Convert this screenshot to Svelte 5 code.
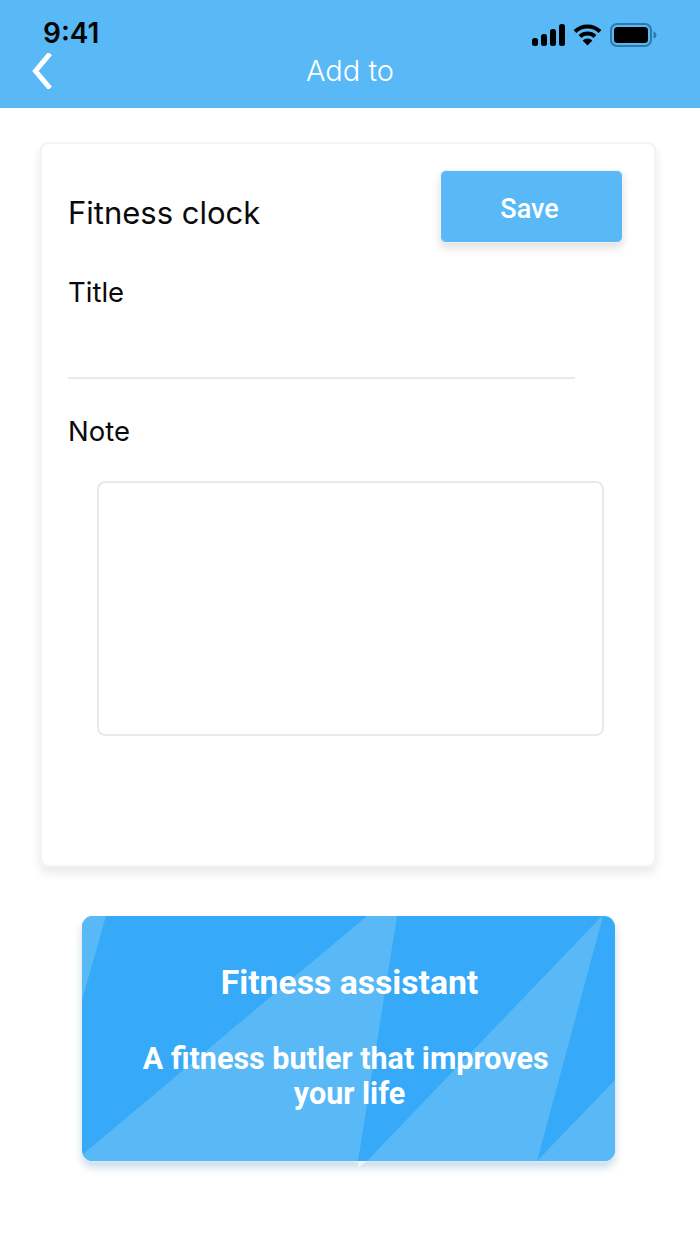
<script>
  const bannerShapes = [
    "0,0 24,0 0,84",
    "0,245 0,239 285,0 315,0 276,245",
    "285,245 520,0 521,0 455,245",
    "455,245 533,164 533,245"
  ];
</script>

<div class="page">
  <header class="top">
    <div class="status">
      <span class="time">9:41</span>
      <div class="indicators">
        <svg class="signal" width="33" height="22" viewBox="0 0 33 22" aria-hidden="true">
          <rect x="0" y="14" width="6" height="8" rx="2.5" />
          <rect x="9" y="10" width="6" height="12" rx="2.5" />
          <rect x="18" y="5" width="6" height="17" rx="2.5" />
          <rect x="27" y="0" width="6" height="22" rx="2.5" />
        </svg>
        <svg class="wifi" width="29" height="22" viewBox="0 0 29 22" aria-hidden="true">
          <path d="M2 7.5 A18 18 0 0 1 27 7.5" />
          <path d="M7 12.5 A11 11 0 0 1 22 12.5" />
          <path class="dot" d="M9.6 16.4 A7 7 0 0 1 19.4 16.4 L14.5 21.5 Z" />
        </svg>
        <svg class="battery" width="47" height="24" viewBox="0 0 47 24" aria-hidden="true">
          <rect class="shell" x="1" y="1" width="40" height="22" rx="6" />
          <rect class="level" x="4" y="4" width="34" height="16" rx="3.5" />
          <path class="cap" d="M43.5 8.5 C45.5 9 46.5 10.5 46.5 12 C46.5 13.5 45.5 15 43.5 15.5 Z" />
        </svg>
      </div>
    </div>
    <nav class="bar">
      <svg class="back" width="20" height="36" viewBox="0 0 20 36" aria-hidden="true">
        <path d="M16.5 2.5 L3.5 18 L16.5 33.5" />
      </svg>
      <h1>Add to</h1>
    </nav>
  </header>

  <main class="content">
    <section class="card">
      <div class="card-head">
        <h2>Fitness clock</h2>
        <button class="save" type="button">Save</button>
      </div>
      <label class="label title-label" for="title">Title</label>
      <input id="title" class="title-input" type="text" />
      <label class="label note-label" for="note">Note</label>
      <textarea id="note" class="note"></textarea>
    </section>

    <section class="banner">
      <div class="banner-face">
        <svg class="banner-art" width="533" height="245" viewBox="0 0 533 245" aria-hidden="true">
          {#each bannerShapes as points}
            <polygon {points} />
          {/each}
        </svg>
        <h3>Fitness assistant</h3>
        <p>A fitness butler that improves&nbsp; your life</p>
      </div>
      <span class="wedge"></span>
    </section>
  </main>
</div>

<style>
  :global(body) {
    margin: 0;
    background: #fff;
  }

  .page {
    width: 700px;
    height: 1244px;
    display: flex;
    flex-direction: column;
    overflow: hidden;
    background: #fff;
    font-family: Inter, "Liberation Sans", sans-serif;
  }

  .top {
    height: 108px;
    flex: none;
    box-sizing: border-box;
    padding-top: 17px;
    background: #58b9f6;
  }

  .status {
    height: 32px;
    display: flex;
    align-items: center;
    justify-content: space-between;
    padding: 0 43px 0 43px;
  }

  .time {
    color: #050505;
    font-size: 28px;
    font-weight: 600;
    line-height: 32px;
  }

  .indicators {
    display: flex;
    align-items: center;
    gap: 8px;
    padding-top: 4px;
  }

  .signal rect,
  .level {
    fill: #000;
  }

  .wifi path {
    fill: none;
    stroke: #000;
    stroke-width: 4;
  }

  .wifi .dot {
    fill: #000;
    stroke: none;
  }

  .shell {
    fill: none;
    stroke: #2f7aab;
    stroke-width: 2;
  }

  .cap {
    fill: #2f7aab;
  }

  .bar {
    height: 44px;
    display: grid;
    grid-template-columns: 1fr auto 1fr;
    align-items: center;
    padding: 0 0 0 32px;
  }

  .back {
    fill: none;
    stroke: #fff;
    stroke-width: 5;
    stroke-linecap: square;
  }

  .bar h1 {
    margin: 0;
    grid-column: 2;
    color: #fff;
    font-size: 29px;
    font-weight: 300;
    line-height: 44px;
    transform: translateX(-16px);
  }

  .content {
    display: flex;
    flex-direction: column;
    align-items: flex-start;
  }

  .card {
    width: 616px;
    height: 725px;
    box-sizing: border-box;
    margin: 34px 0 0 40px;
    padding: 26px 31px 0 26px;
    display: flex;
    flex-direction: column;
    align-items: flex-start;
    border: 2px solid #f3f3f9;
    border-radius: 8px;
    background: #fff;
    box-shadow: 0 6px 10px rgba(40, 40, 60, 0.1);
  }

  .card-head {
    width: 100%;
    display: flex;
    align-items: flex-start;
    justify-content: space-between;
  }

  .card-head h2 {
    margin: 0;
    padding-top: 24px;
    color: #0a0a0a;
    font-size: 31px;
    font-weight: 400;
    line-height: 38px;
  }

  .save {
    width: 183px;
    height: 73px;
    box-sizing: border-box;
    padding: 4px 4px 0 0;
    border: 1px solid #f0f0f6;
    border-radius: 6px;
    background: #58b9f6;
    color: #fff;
    font-family: Roboto, "Liberation Sans", sans-serif;
    font-size: 27px;
    font-weight: 500;
    box-shadow: 0 5px 8px rgba(40, 40, 60, 0.14);
  }

  .label {
    color: #0a0a0a;
    font-size: 27.5px;
    font-weight: 400;
    line-height: 34px;
  }

  .title-label {
    margin-top: 32px;
  }

  .title-input {
    width: 507px;
    height: 70px;
    box-sizing: border-box;
    margin: 0;
    padding: 0;
    border: 0;
    border-bottom: 2px solid #e8e8ee;
    outline: 0;
    background: transparent;
  }

  .note-label {
    margin-top: 35px;
  }

  .note {
    width: 507px;
    height: 255px;
    box-sizing: border-box;
    margin: 33px 0 0 29px;
    padding: 0;
    border: 2px solid #e8e8ee;
    border-radius: 8px;
    outline: 0;
    resize: none;
    background: #fff;
  }

  .banner {
    position: relative;
    width: 533px;
    height: 245px;
    margin: 49px 0 0 82px;
    border-radius: 11px;
    box-shadow: 0 2px 0 #d3e9f8, 0 6px 9px rgba(60, 130, 180, 0.3);
  }

  .banner-face {
    position: relative;
    height: 100%;
    box-sizing: border-box;
    padding: 48px 55px 0 57px;
    border-radius: 11px;
    overflow: hidden;
    background: #36aaf8;
    color: #fff;
    font-family: Roboto, "Liberation Sans", sans-serif;
    font-weight: 700;
    text-align: center;
  }

  .banner-art {
    position: absolute;
    inset: 0;
    fill: #58b9f6;
  }

  .banner h3,
  .banner p {
    position: relative;
    margin: 0;
  }

  .banner h3 {
    font-size: 33.7px;
    font-weight: 700;
    line-height: 38px;
    white-space: nowrap;
  }

  .banner p {
    margin-top: 39px;
    font-size: 30.5px;
    font-weight: 700;
    line-height: 35px;
  }

  .wedge {
    position: absolute;
    left: 276px;
    top: 245px;
    width: 9px;
    height: 7px;
    background: #eef3f6;
    clip-path: polygon(0 0, 100% 0, 0 100%);
  }
</style>
